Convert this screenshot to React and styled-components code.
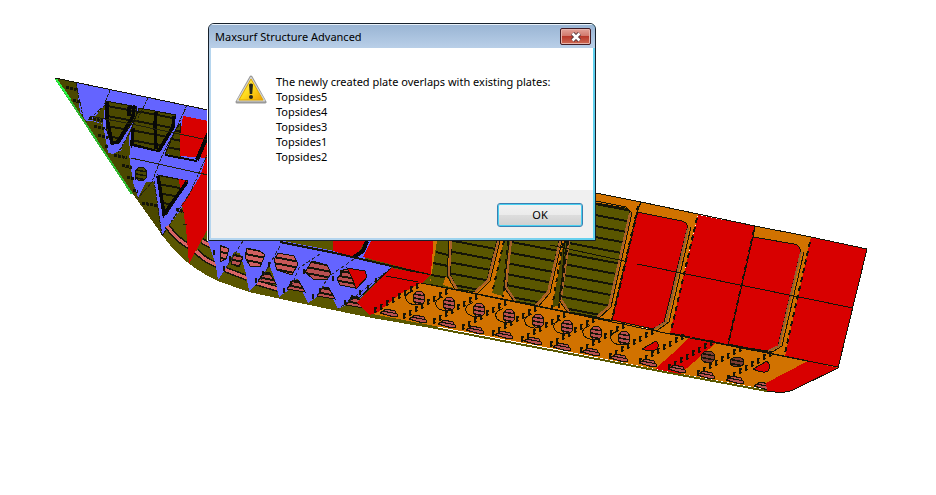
import React, { useId } from "react";
import styled, { createGlobalStyle } from "styled-components";

const OLIVE = "#5a5600";
const DARK_OLIVE = "#4b4800";
const BLUE = "#6464ff";
const ORANGE = "#d17200";
const RED = "#d80000";
const PINK = "#b85050";
const INK = "#141408";

const plates = ["Topsides5", "Topsides4", "Topsides3", "Topsides1", "Topsides2"];

// parallel stiffeners, falling towards the stern like the deck line
function Stiffeners({ shape, box, gap, slope = 0.19, width = 2, offset = 0 }) {
    const id = useId();
    const [x, y, w, h] = box;
    const lines = [];
    for (let top = y - w * slope + offset; top < y + h; top += gap) {
        lines.push(`M${x} ${top}l${w} ${w * slope}`);
    }
    return (
        <g>
            <clipPath id={id}>
                <path d={shape} />
            </clipPath>
            <path d={lines.join("")} stroke={INK} strokeWidth={width} clipPath={`url(#${id})`} />
        </g>
    );
}

function Opening({ d, box, fill = OLIVE, gap = 11, slope, width, offset }) {
    return (
        <g>
            <path d={d} fill={fill} />
            <Stiffeners shape={d} box={box} gap={gap} slope={slope} width={width} offset={offset} />
            <path d={d} fill="none" stroke={INK} />
        </g>
    );
}

// small striped blob seen through a lightening hole
function Hole({ x, y, rx = 7, ry = 7, fill = PINK }) {
    const d = `M${x - rx} ${y}a${rx} ${ry} 0 1 0 ${rx * 2} 0a${rx} ${ry} 0 1 0 ${-rx * 2} 0`;
    return <Opening d={d} fill={fill} box={[x - rx, y - ry, rx * 2, ry * 2]} gap={4} offset={1} width={1.5} />;
}

// diagonal floor edge with its row of notches
function Floor({ x, y, length = 46 }) {
    const ticks = [];
    for (let i = 0; i < length; i += 6) {
        ticks.push(`M${x + i + 3} ${y - i * 0.58 - 5}h-2v5`);
    }
    return (
        <g fill="none" stroke={INK}>
            <path d={`M${x} ${y}l${length} ${-length * 0.58}`} strokeDasharray="3 4" />
            <path d={ticks.join("")} strokeWidth="1.3" />
        </g>
    );
}

function Bow() {
    return (
        <g>
            <path d="M76 82L208 110V160L200 182L162 236L157 200L154 182L146 182L138 198L133 182L129 155L124 148L120 151L113 154L108 153L103 124L92 121L86 121L80 112Z" fill={BLUE} />
            <path d="M105 105L98 113L92 120L103 124Z M131 128L121 149L130 155L129 137Z" fill={DARK_OLIVE} />
            <Opening d="M106 101L137 107L136 117L119 143L111 143L107 131Z" box={[103, 98, 36, 50]} fill={DARK_OLIVE} gap={10} width={2} offset={4} />
            <Opening d="M139 108L176 115L173 128L158 152L131 147L131 130Z" box={[128, 105, 50, 52]} fill={DARK_OLIVE} gap={10} width={2} offset={4} />
            <Opening d="M176 129L180 124V158L165 154Z" box={[162, 123, 20, 36]} fill={DARK_OLIVE} gap={9} />
            <path d="M183 116L208 121V158L180 156V137Z" fill={RED} />
            <g fill="none" stroke="#080808" strokeWidth="3.5" strokeLinejoin="round">
                <path d="M107 102V118L112 143L118 142L133 116L134 107L129 108V116" />
                <path d="M156 112L155 124L156 149M174 116L173 127L158 152L132 145L133 128" />
                <path d="M208 134L197 160" strokeWidth="4" />
            </g>
            <path d="M132 146L197 161L208 159V182L190 180L155 174L129 158Z" fill={BLUE} />
            <path d="M165 155L197 161" stroke="#080808" strokeWidth="2" />
            <Hole x={141} y={174} rx={6} ry={7} fill={DARK_OLIVE} />
            <Opening d="M158 175L188 181L166 215L162 207Z" box={[156, 172, 34, 44]} fill={DARK_OLIVE} gap={9} width={2} />
            <path d="M179 179L187 181L180 188Z" fill={RED} />
            <path d="M158 176L164 214L187 182" fill="none" stroke="#080808" strokeWidth="3.5" />
            <path d="M208 153L200 176L190 193L182 204L186 228L189 264L208 228Z" fill={RED} />
            <g fill="none" stroke="#20200c" strokeDasharray="3 1">
                <path d="M76 83L83 117M110 90L104 106L86 122M148 98L138 118L118 153M187 105L178 125L161 158L152 182L138 198M208 153L190 193L162 236L154 180" />
                <path d="M90 116L136 125L208 140M131 158L208 175M183 224L208 230" strokeDasharray="none" />
            </g>
            <g stroke={INK} strokeWidth="3" strokeDasharray="3 1">
                <path d="M66 87L78 90M73 100L80 102M89 118L103 121M94 126L106 129M98 135L110 138M105 146L108 147M114 155L127 158M122 165L132 168M127 177L136 179M133 190L138 192M142 203L158 206M176 209L184 212" />
            </g>
            <path d="M56 79L132 194" stroke="#30b830" strokeWidth="2" />
            <path d="M56 79L70 99" stroke="#28f040" strokeWidth="2" />
        </g>
    );
}

function Bilge() {
    return (
        <g>
            <g fill="none" strokeLinecap="butt">
                <path d="M167 226Q177 240 190 247M196 251Q204 260 217 265M202 241L215 248M224 269L247 278M254 282L278 289" stroke="#18180c" strokeWidth="6" />
                <path d="M167 226Q177 240 190 247M196 251Q204 260 217 265M202 241L215 248M224 269L247 278M254 282L278 289" stroke="#d86464" strokeWidth="3" />
            </g>
            <path d="M186 225H209L189 264Z" fill={RED} />
            <path d="M208 241H300L391 267L362 297L338 309L332 297L323 285L317 297L308 303L303 293L297 278L290 289L279 297L275 280L269 264L261 280L249 291L246 274L240 253L234 252L226 268L218 280L216 266L211 250Z" fill={BLUE} />
            <Opening d="M220 245L229 249L226 259L220 262Z" box={[217, 242, 14, 22]} fill="#d06060" gap={6} />
            <Opening d="M234 254L243 257L239 267L231 264Z" box={[230, 252, 14, 18]} fill={PINK} gap={5} />
            <Opening d="M247 248L260 251L265 255L260 267L250 266L245 257Z" box={[244, 246, 22, 24]} fill="#d06060" gap={6} />
            <Opening d="M278 253L294 256L298 264L292 275L277 270L274 260Z" box={[272, 250, 28, 26]} fill="#c85858" gap={6} />
            <Opening d="M312 261L327 265L331 273L327 280L313 279L305 272Z" box={[304, 260, 28, 24]} fill={PINK} gap={6} />
            <Opening d="M344 269L364 271L366 279L355 288L340 285L337 279Z" box={[336, 266, 30, 24]} fill={PINK} gap={5} />
            <path d="M347 268L365 271L367 277L356 289Q353 278 347 268Z" fill={RED} stroke={INK} />
            {[[266, 279], [295, 287], [325, 294], [354, 303]].map(([x, y]) => (
                <Opening
                    key={x}
                    d={`M${x - 2} ${y - 7}L${x + 4} ${y - 6}L${x + 10} ${y + 5}L${x - 8} ${y + 2}Z`}
                    box={[x - 8, y - 8, 20, 15]}
                    fill={PINK}
                    gap={5}
                />
            ))}
            <path d="M243 241L226 268M280 246L261 280M320 254L299 268L290 289M354 259L328 277L317 297M391 268L356 296L338 309" fill="none" stroke="#25252d" strokeDasharray="4 2" />
            <path d="M283 241H335V251Z" fill={OLIVE} />
            <path d="M333 241H365L355 258L333 251Z" fill={RED} />
            <path d="M366 241L361 253L354 259L364 260L371 241Z" fill={BLUE} />
            <path d="M367 241L363 251L354 257" fill="none" stroke="#080808" strokeWidth="4" />
            <path d="M371 241H438L435 260L431 275L363 257Z" fill={RED} />
            <path d="M280 242L335 253L430 275" fill="none" stroke={INK} strokeWidth="2" />
            <path d="M391 268L430 275L421 284L400 294L378 312L369 315L357 302Z" fill={RED} />
            <path d="M386 276L418 282M391 268L357 300" stroke={INK} fill="none" />
            <g stroke={INK} strokeWidth="2">
                <path d="M345 300v5M352 295v5M360 290v5M368 285v5M376 278v5M313 294v5M320 288v5M333 276v5M341 270v5M284 288v5M291 281v5M304 269v5M256 278v5M263 271v5M269 262v5M224 266v5M230 256v5M214 250v5" />
            </g>
        </g>
    );
}

function Topsides() {
    return (
        <g>
            <path d="M440 160L596 193L641 202L698 214L641 330L430 285Z" fill={ORANGE} />
            <path d="M437 241H449L447 267L453 289L430 284Z" fill={OLIVE} />
            <path d="M431 275L449 278M433 263L448 266M436 252L448 255" stroke={INK} strokeWidth="2" />
            <path d="M446 276L457 289L443 285Z" fill={ORANGE} />
            <Opening d="M452 236H498L487 280L475 292L457 289L450 274Z" box={[445, 236, 56, 60]} offset={3} />
            <path d="M504 241H510L503 296L492 293Z" fill={OLIVE} />
            <Opening d="M511 236H560L548 292L536 305L515 301L507 287Z" box={[504, 236, 60, 72]} offset={5} />
            <path d="M564 241H569L559 305L552 308Z" fill={DARK_OLIVE} />
            <Opening d="M567 198L596 203L625 208Q630 210 630 215L609 307L597 317L570 312L561 299Z" box={[558, 198, 74, 122]} offset={2} />
            <g fill="none" stroke="#a8602a" strokeWidth="2">
                <path d="M498 241L488 280L475 292M451 241L449 275L457 289M560 241L548 292L536 305M511 241L506 287L516 302M630 213L609 306L597 317M569 241L561 299L569 312" />
            </g>
            <g fill="none" stroke={INK}>
                <path d="M500 241L490 281L477 294M449 241L447 276L456 291M562 241L550 293L538 307M509 241L504 287L515 303M632 213L611 307L598 319M567 241L559 300L568 313M596 201L626 207L632 213" />
                <path d="M504 241L492 294M563 243L552 308M638 206L612 320" strokeWidth="2" strokeDasharray="4 5" />
                <path d="M508 241L503 297M568 241L559 308" strokeWidth="2" strokeDasharray="5 4" />
                <path d="M430 285L550 309L612 321" strokeWidth="2" />
                <path d="M550 245L680 273" />
            </g>

            <path d="M641 202L698 214L670 334L612 320Z" fill={ORANGE} />
            <path d="M637 212L682 221Q689 223 687 229L664 322L653 329L612 320Z" fill={RED} stroke={INK} />
            <path d="M688 228L666 322L654 329" fill="none" stroke="#97602f" strokeWidth="2" />
            <path d="M691 227L669 322L655 332" fill="none" stroke={INK} />
            <path d="M698 215L755 226L728 346L670 333Z" fill={RED} />
            <path d="M755 226L811 237L785 356L728 346Z" fill={ORANGE} />
            <path d="M753 237L794 244Q802 246 800 254L778 346L768 351L728 345Z" fill={RED} stroke={INK} />
            <path d="M801 252L779 346L768 351" fill="none" stroke="#97602f" strokeWidth="2" />
            <path d="M804 252L782 346L769 354" fill="none" stroke={INK} />
            <path d="M811 237L867 249L838 368L785 356Z" fill={RED} />
            <g fill="none" stroke={INK}>
                <path d="M596 193L641 202L698 214L755 226L811 237L867 249L838 368" />
                <path d="M641 202L637 212M755 226L753 237" />
                <path d="M637 213L612 320M697 218L671 331M754 230L728 345M810 242L785 353" strokeWidth="2" strokeDasharray="5 4" />
                <path d="M637 264L853 308M670 333L838 367" />
                <path d="M728 345L768 353" strokeWidth="3" />
            </g>
        </g>
    );
}

function Bottom() {
    const floors = [];
    for (let i = 0; i < 13; i++) {
        floors.push(<Floor key={i} x={Math.round(374 + i * 29.4)} y={Math.round(313 + i * 5.7)} />);
    }
    const blobs = [];
    for (let i = 0; i < 14; i++) {
        const x = Math.round(390 + i * 28.8);
        const y = Math.round(313 + i * 5.6);
        blobs.push(
            <Opening
                key={i}
                d={`M${x - 10} ${y}L${x - 4} ${y - 4}L${x + 5} ${y - 2}L${x + 8} ${y + 3}L${x + 4} ${y + 4}Z`}
                box={[x - 10, y - 4, 18, 9]}
                fill={PINK}
                gap={5}
                width={1}
            />
        );
    }
    return (
        <g>
            <path d="M421 283L550 309L670 334L838 367L793 390L770 390L660 370L550 348L440 327L372 314L400 294Z" fill={ORANGE} />
            <path d="M400 294L421 283L430 276L391 268L357 302L369 315L378 312Z" fill={RED} />
            <path d="M690 337L716 343L680 374L655 369L672 354Z" fill={RED} />
            <path d="M642 349L656 341Q660 344 657 349Q653 353 642 349Z" fill={RED} stroke={INK} />
            <path d="M753 369L767 361Q772 366 768 371Q764 374 753 369Z" fill={RED} stroke={INK} />
            {floors}
            {blobs}
            <g fill="none" stroke={INK}>
                {[418, 448, 478, 508, 537, 566, 595, 623].map((x) => (
                    <path key={x} d={`M${x - 5} ${298 + (x - 418) * 0.195 - 7}q-9 3 -7 8q1 5 10 6`} />
                ))}
            </g>
            {[418, 448, 478, 508, 537, 566, 595, 623].map((x) => (
                <Hole key={x} x={x + 1} y={Math.round(298 + (x - 418) * 0.195)} rx={6} />
            ))}
            <Hole x={708} y={357} rx={7} ry={6} fill="#7c3b30" />
            <Hole x={737} y={362} rx={7} ry={5} fill="#7c3b30" />
            <path d="M808 361L838 368L793 390Q786 394 767 391L766 383Z" fill={RED} />
            <path d="M421 283L550 309L670 334L838 367" fill="none" stroke={INK} />
            <path d="M386 276L418 282" stroke={INK} />
            <path d="M372 315L440 329L550 350L670 373L767 391" fill="none" stroke="#5a5800" strokeWidth="2" />
            <path d="M767 391Q785 394 793 390L838 368" fill="none" stroke={INK} />
        </g>
    );
}

function ShipModel() {
    return (
        <Drawing viewBox="0 0 936 495" role="img" aria-label="Ship structure model" shapeRendering="crispEdges">
            <path d="M55 78L208 110V241H437V329L372 318L290 301L249 292L218 281Q183 265 163 236L130 190Z" fill={OLIVE} />
            <path d="M55 78L208 110V160L163 236L130 190Z" fill={DARK_OLIVE} />
            <Bow />
            <path d="M55 78L208 110" stroke={INK} />
            <Bilge />
            <Topsides />
            <Bottom />
        </Drawing>
    );
}

function WarningIcon() {
    return (
        <Warning viewBox="0 0 32 32" aria-hidden="true">
            <defs>
                <linearGradient id="warn" x2="1" y2="1">
                    <stop offset="0" stopColor="#fff27a" />
                    <stop offset=".5" stopColor="#ffdc1c" />
                    <stop offset="1" stopColor="#ef9a00" />
                </linearGradient>
            </defs>
            <path d="M16 3L30 28H2Z" fill="#999" stroke="#999" strokeWidth="3" strokeLinejoin="round" />
            <path d="M16 3L30 27H2Z" fill="#d4d4d0" stroke="#d4d4d0" strokeLinejoin="round" />
            <path d="M16 5L28 26H4Z" fill="url(#warn)" stroke="#dfa800" strokeLinejoin="round" />
            <path d="M14 10.5Q16 8.5 18 10.5L17.2 20H14.8Z" fill="#25251c" />
            <circle cx="16" cy="23" r="2" fill="#25251c" />
        </Warning>
    );
}

function App() {
    return (
        <Viewport>
            <GlobalStyle />
            <ShipModel />
            <Dialog role="alertdialog" aria-labelledby="dialog-title" aria-describedby="dialog-text">
                <TitleBar>
                    <Title id="dialog-title">Maxsurf Structure Advanced</Title>
                    <CloseButton type="button" aria-label="Close">
                        <svg width="12" height="10" viewBox="0 0 12 10" aria-hidden="true">
                            <path d="M2.5 1.5L9.5 8.5M9.5 1.5L2.5 8.5" stroke="#51343a" strokeWidth="4.4" />
                            <path d="M2.5 1.5L9.5 8.5M9.5 1.5L2.5 8.5" stroke="#fff" strokeWidth="2.6" />
                        </svg>
                    </CloseButton>
                </TitleBar>
                <Content>
                    <WarningIcon />
                    <Message id="dialog-text">
                        <p>The newly created plate overlaps with existing plates:</p>
                        {plates.map((plate) => (
                            <p key={plate}>{plate}</p>
                        ))}
                    </Message>
                </Content>
                <Footer>
                    <OkButton type="button">OK</OkButton>
                </Footer>
            </Dialog>
        </Viewport>
    );
}

const GlobalStyle = createGlobalStyle`
    * {
        box-sizing: border-box;
    }
    body {
        margin: 0;
        background: #fff;
        font-family: "Segoe UI", "Noto Sans", "Open Sans", sans-serif;
        font-size: 11px;
        line-height: 15px;
        color: #000;
    }
    p {
        margin: 0;
    }
`;
const Viewport = styled.main`
    position: relative;
    min-height: 100vh;
    overflow: hidden;
`;
const Drawing = styled.svg`
    display: block;
    width: 100%;
    height: auto;
`;
const Dialog = styled.section`
    position: absolute;
    top: 23px;
    left: 208px;
    width: 388px;
    padding: 0 2px 2px;
    border: 1px solid #16202b;
    border-radius: 6px 6px 0 0;
    background: linear-gradient(90deg, #b5d5ee, #b5d5ee 50%, #5fd0ee);
    box-shadow: -1px 0 #fff;
    overflow: hidden;
`;
const TitleBar = styled.header`
    display: flex;
    align-items: center;
    justify-content: space-between;
    height: 24px;
    margin: 0 -2px;
    padding: 0 4px 0 6px;
    border-top: 1px solid #e8f1fa;
    background: linear-gradient(#9ab5d4, #b9cfe8);
`;
const Title = styled.h1`
    margin: 0;
    font-size: 11px;
    font-weight: 400;
`;
const CloseButton = styled.button`
    display: flex;
    align-items: center;
    justify-content: center;
    width: 31px;
    height: 17px;
    padding: 0;
    border: 1px solid #431c24;
    border-radius: 2px;
    background: linear-gradient(#e3a399, #d0766a 48%, #b8392b 50%, #cf6b55);
    box-shadow: inset 0 0 0 1px #e6b3aa;
`;
const Content = styled.div`
    display: flex;
    gap: 9px;
    padding: 26px 24px;
    background: #fff;
`;
const Warning = styled.svg`
    flex: none;
    width: 32px;
    height: 32px;
`;
const Message = styled.div`
    white-space: nowrap;
`;
const Footer = styled.footer`
    display: flex;
    justify-content: flex-end;
    padding: 13px 10px 11px;
    background: #f0f0f0;
`;
const OkButton = styled.button`
    width: 86px;
    height: 24px;
    padding: 0 0 2px;
    border: 1px solid #3c7fb1;
    border-radius: 3px;
    background: linear-gradient(#f2f2f2, #ebebeb 48%, #dddddd 50%, #cfcfcf);
    box-shadow: inset 0 0 0 1px #48d0f0;
    font: inherit;
    color: #000;
`;
export default App;
